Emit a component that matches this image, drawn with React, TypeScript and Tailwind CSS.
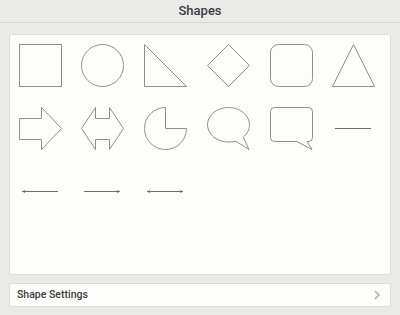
import React from "react";

const S = "#8f8f8f";
const L = "#6e6e6e";

function Svg({ children }: { children: React.ReactNode }) {
  return (
    <svg width="43" height="43" viewBox="0 0 43 43" fill="none" stroke={S} strokeWidth="1">
      {children}
    </svg>
  );
}

function LineArrow({ left, right }: { left?: boolean; right?: boolean }) {
  return (
    <svg width="43" height="43" viewBox="0 0 43 43" fill="none" stroke={L} strokeWidth="1">
      <line x1="3" y1="21.5" x2="39" y2="21.5" />
      {left && <path d="M3 21.5 L6 20 L6 23 Z" fill={L} stroke="none" />}
      {right && <path d="M39 21.5 L36 20 L36 23 Z" fill={L} stroke="none" />}
    </svg>
  );
}

export default function App() {
  return (
    <div className="w-[400px] h-[315px] bg-[#ebebe8] flex flex-col" style={{ fontFamily: "Roboto, 'Liberation Sans', sans-serif" }}>
      <div className="h-[23px] border-b border-[#d5d6d2] flex items-center justify-center text-[13px] font-medium text-[#3b3e42]">
        Shapes
      </div>
      <div className="mx-[9px] mt-[11px] h-[241px] bg-[#fdfdfb] border border-[#dcdcd8] rounded-[2px] pl-[8.5px] pt-[8.5px]">
        <div className="grid grid-cols-[repeat(6,43px)] gap-x-[19.8px] gap-y-[20px]">
          <Svg><rect x="0.5" y="0.5" width="42" height="42" /></Svg>
          <Svg><circle cx="21.5" cy="21.5" r="21" /></Svg>
          <Svg><path d="M0.5 0.5 L42.5 42.5 L0.5 42.5 Z" /></Svg>
          <Svg><path d="M21.5 0.5 L42.5 21.5 L21.5 42.5 L0.5 21.5 Z" /></Svg>
          <Svg><rect x="0.5" y="0.5" width="42" height="42" rx="8" /></Svg>
          <Svg><path d="M21.5 0.5 L42.5 42.5 L0.5 42.5 Z" /></Svg>

          <Svg><path d="M0.5 11.5 L22.5 11.5 L22.5 0.5 L42.5 21.5 L22.5 42.5 L22.5 32.5 L0.5 32.5 Z" /></Svg>
          <Svg><path d="M0.5 21.5 L14.5 0.5 L14.5 11.5 L28.5 11.5 L28.5 0.5 L42.5 21.5 L28.5 42.5 L28.5 32.5 L14.5 32.5 L14.5 42.5 Z" /></Svg>
          <Svg><path d="M21.5 0.5 L21.5 21.5 L42.5 21.5 A21 21 0 1 1 21.5 0.5 Z" /></Svg>
          <Svg>
            <path d="M29 34.3 C26.6 34.8 24.1 35 21.5 35 C10 35 0.5 27.2 0.5 17.75 C0.5 8.3 10 0.5 21.5 0.5 C33 0.5 42.5 8.3 42.5 17.75 C42.5 22.6 40 27 36.3 30.2 L42 42.5 Z" />
          </Svg>
          <Svg><path d="M4.5 0.5 L38.5 0.5 Q42.5 0.5 42.5 4.5 L42.5 30.5 Q42.5 34.5 38.5 34.5 L37 34.5 L42 42.5 L27 34.5 L4.5 34.5 Q0.5 34.5 0.5 30.5 L0.5 4.5 Q0.5 0.5 4.5 0.5 Z" /></Svg>
          <svg width="43" height="43" viewBox="0 0 43 43" fill="none" stroke={L} strokeWidth="1">
            <line x1="3" y1="21.5" x2="39" y2="21.5" />
          </svg>

          <LineArrow left />
          <LineArrow right />
          <LineArrow left right />
        </div>
      </div>
      <div className="mx-[9px] mt-[8px] h-[24px] bg-[#fdfdfb] border border-[#dcdcd8] rounded-[2px] flex items-center justify-between pl-[7px] pr-[10px]">
        <span className="text-[10.5px] font-medium text-[#3b3e42]">Shape Settings</span>
        <svg width="6" height="10" viewBox="0 0 6 10" fill="none" stroke="#b3b3b3" strokeWidth="1.6">
          <path d="M1 1 L5 5 L1 9" />
        </svg>
      </div>
    </div>
  );
}
